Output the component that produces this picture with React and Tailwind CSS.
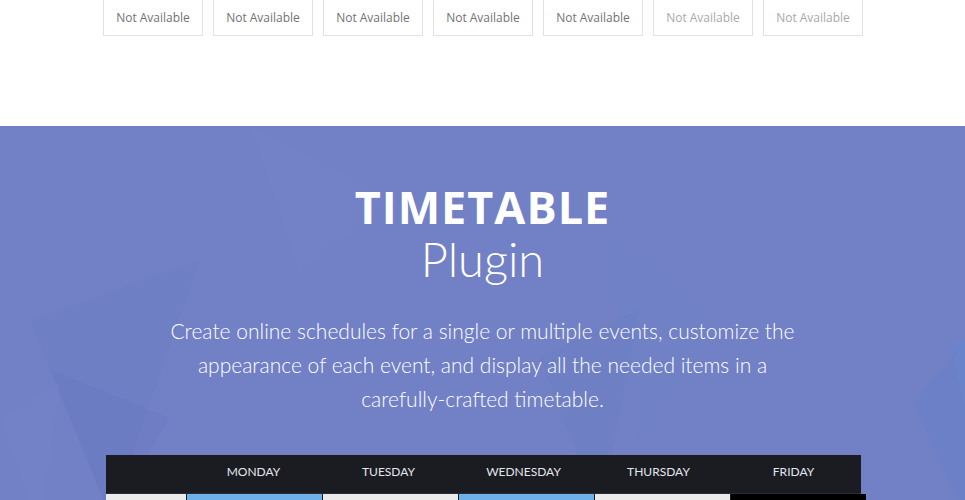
import React from "react";

const slots = [
  { label: "Not Available", muted: false },
  { label: "Not Available", muted: false },
  { label: "Not Available", muted: false },
  { label: "Not Available", muted: false },
  { label: "Not Available", muted: false },
  { label: "Not Available", muted: true },
  { label: "Not Available", muted: true },
];

const days = ["Monday", "Tuesday", "Wednesday", "Thursday", "Friday"];

const rowCells = ["bg-[#6eb1ea]", "bg-[#ebebeb]", "bg-[#6eb1ea]", "bg-[#ebebeb]", "bg-black"];

const Backdrop = () => (
  <svg
    className="absolute inset-0 h-full w-full"
    viewBox="0 0 965 400"
    preserveAspectRatio="none"
  >
    <polygon points="30,160 200,110 110,320" fill="#6a7fc4" opacity="0.45" />
    <polygon points="50,200 170,240 110,320" fill="#6678c2" opacity="0.35" />
    <polygon points="0,240 60,210 40,330" fill="#7687c9" opacity="0.3" />
    <polygon points="600,80 720,160 640,260" fill="#6e83c8" opacity="0.35" />
    <polygon points="540,190 640,150 600,320" fill="#6b7fc5" opacity="0.3" />
    <polygon points="914,228 965,176 965,320" fill="#6a80c8" opacity="0.8" />
    <polygon points="950,178 965,176 965,230" fill="#6a85cc" opacity="0.8" />
    <polygon points="250,0 400,60 300,120" fill="#7686ca" opacity="0.25" />
  </svg>
);

const App = () => {
  return (
    <div className="min-h-screen bg-white font-['Open_Sans',sans-serif]">
      <div className="flex h-[126px] justify-center pl-px">
        <div className="-mt-px flex gap-[10px]">
          {slots.map((slot, i) => (
            <div
              key={i}
              className={`flex h-[37px] w-[100px] items-center justify-center border border-[#e2e2e2] text-[12px] ${
                slot.muted ? "text-[#a9a9a9]" : "text-[#737373]"
              }`}
            >
              {slot.label}
            </div>
          ))}
        </div>
      </div>

      <section className="relative overflow-hidden bg-[#7280c5] pb-20">
        <Backdrop />
        <div className="relative flex flex-col items-center pt-[59px]">
          <h2 className="font-['Open_Sans',sans-serif] text-[45px] font-bold leading-[44px] tracking-[1px] text-white">
            TIMETABLE
          </h2>
          <p className="mt-[4px] font-['Lato',sans-serif] text-[47px] font-light leading-[52px] text-white">
            Plugin
          </p>
          <p className="mt-[29px] max-w-[645px] text-center font-['Lato',sans-serif] text-[21px] font-light leading-[34px] text-white">
            Create online schedules for a single or multiple events, customize the appearance of each
            event, and display all the needed items in a carefully-crafted timetable.
          </p>

          <div className="ml-[2px] mt-[39px] w-[755px] bg-[#1a1c21]">
            <div className="grid h-[38px] grid-cols-[80px_repeat(5,135px)] items-center pb-[4px]">
              <div />
              {days.map((d) => (
                <div
                  key={d}
                  className="text-center font-['Lato',sans-serif] text-[12px] uppercase text-[#e4e6ee]"
                >
                  {d}
                </div>
              ))}
            </div>
            <div className="grid h-[40px] grid-cols-[80px_repeat(5,135px)] gap-px border-t border-[#2a2d33]">
              <div className="bg-[#ebebeb]" />
              {rowCells.map((c, i) => (
                <div key={i} className={c} />
              ))}
            </div>
          </div>
        </div>
      </section>
    </div>
  );
};

export default App;
